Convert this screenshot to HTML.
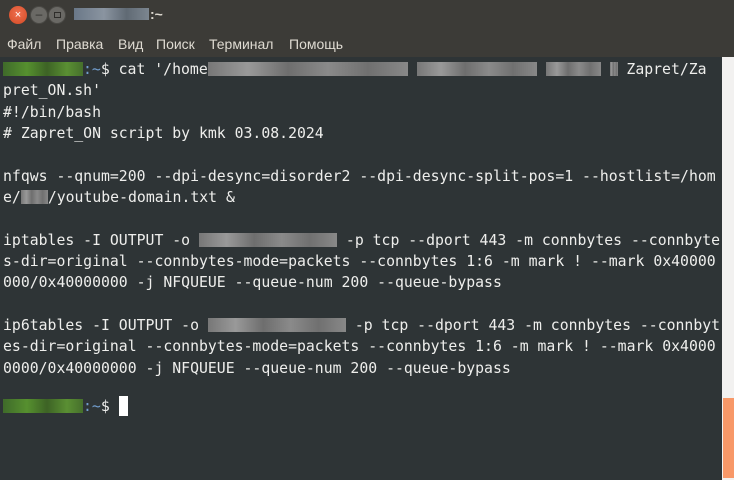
<!DOCTYPE html>
<html><head><meta charset="utf-8"><style>
*{margin:0;padding:0;box-sizing:border-box}
body{width:734px;height:480px;background:#2e3436;overflow:hidden;position:relative;font-family:"Liberation Sans","DejaVu Sans",sans-serif}
#title{position:absolute;left:0;top:0;width:734px;height:31px;background:#3c3b37}
.btn{position:absolute;top:6px;width:18px;height:18px;border-radius:50%}
#menu{position:absolute;left:0;top:31px;width:734px;height:26px;background:#3c3b37;color:#dfdbd2;font-size:14px}
#menu span{position:absolute;top:5px}
#term{position:absolute;left:3px;top:59px;width:718px;font-family:"DejaVu Sans Mono","Liberation Mono",monospace;font-size:14.8px;line-height:21.35px;color:#eeeeec;white-space:pre;overflow:hidden}
.b{display:inline-block;height:14px;vertical-align:-2px;background:linear-gradient(90deg,#777 0,#999 20%,#6e6e6e 40%,#8a8a8a 60%,#707070 80%,#888 100%)}
.g{display:inline-block;height:14px;vertical-align:-2px;background:linear-gradient(90deg,#3f6a2a,#56902f 30%,#3d6325 55%,#5a8f33 80%,#466f2c)}
.bl{color:#729fcf}
#sb{position:absolute;left:722px;top:57px;width:12px;height:423px;background:#f2f1f0}
#th{position:absolute;left:723px;top:398px;width:11px;height:80px;background:#f89868}
</style></head><body>
<div id="title">
<div class="btn" style="left:9px;background:radial-gradient(circle at 50% 40%,#f07050,#d34a24);color:#fff;font-size:11px;text-align:center;line-height:18px">×</div>
<div class="btn" style="left:30px;background:#6a6965;border:1px solid #4a4945;color:#2e2d2a;font-size:12px;text-align:center;line-height:15px">–</div>
<div class="btn" style="left:48px;background:#6a6965;border:1px solid #4a4945"><div style="position:absolute;left:5px;top:5px;width:7px;height:6px;border:1px solid #2e2d2a"></div></div>
<div style="position:absolute;left:74px;top:8px;width:75px;height:12px;background:linear-gradient(90deg,#6a7888,#8a94a0 40%,#606a74 70%,#7c8690)"></div>
<span style="position:absolute;left:150px;top:6px;color:#dfdbd2;font-size:14px;font-weight:bold">:~</span>
</div>
<div id="menu"><span style="left:7px">Файл</span><span style="left:56px">Правка</span><span style="left:118px">Вид</span><span style="left:156px">Поиск</span><span style="left:209px">Терминал</span><span style="left:289px">Помощь</span></div>
<div id="term"><span class="g" style="width:80px"></span><span class="bl">:~</span>$ cat '/home<span class="b" style="width:200px"></span> <span class="b" style="width:120px"></span> <span class="b" style="width:55px"></span> <span class="b" style="width:8px"></span> Zapret/Za
pret_ON.sh'
#!/bin/bash
# Zapret_ON script by kmk 03.08.2024

nfqws --qnum=200 --dpi-desync=disorder2 --dpi-desync-split-pos=1 --hostlist=/hom
e/<span class="b" style="width:27px"></span>/youtube-domain.txt &amp;

iptables -I OUTPUT -o <span class="b" style="width:138px"></span> -p tcp --dport 443 -m connbytes --connbyte
s-dir=original --connbytes-mode=packets --connbytes 1:6 -m mark ! --mark 0x40000
000/0x40000000 -j NFQUEUE --queue-num 200 --queue-bypass

<span style="position:relative;top:0">ip6tables -I OUTPUT -o <span class="b" style="width:138px"></span> -p tcp --dport 443 -m connbytes --connbyt</span>
es-dir=original --connbytes-mode=packets --connbytes 1:6 -m mark ! --mark 0x4000
0000/0x40000000 -j NFQUEUE --queue-num 200 --queue-bypass

<span style="position:relative;top:-5px"><span class="g" style="width:80px"></span><span class="bl">:~</span>$ <span style="display:inline-block;width:9px;height:20px;background:#fff;vertical-align:-5px"></span></span></div>
<div id="sb"></div><div id="th"></div>
</body></html>
